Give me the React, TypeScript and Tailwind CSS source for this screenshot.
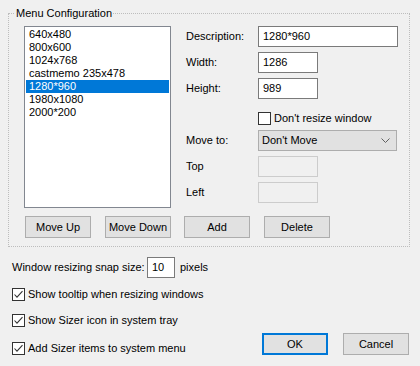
import React from "react";

const Check = ({ checked }: { checked: boolean }) => (
  <span className="w-[13px] h-[13px] border border-[#333333] bg-white flex items-center justify-center shrink-0">
    {checked && (
      <svg width="11" height="11" viewBox="0 0 11 11">
        <path d="M1.5 5.5 L4 8.2 L9.5 2.2" fill="none" stroke="#333333" strokeWidth="1.1" />
      </svg>
    )}
  </span>
);

const Btn = ({ children, primary }: { children: React.ReactNode; primary?: boolean }) => (
  <button
    className={
      primary
        ? "w-[66px] h-[22px] bg-[#e1e1e1] border-2 border-[#0078d7] text-black leading-[18px] shrink-0"
        : "w-[66px] h-[22px] bg-[#e1e1e1] border border-[#adadad] text-black leading-[20px] shrink-0"
    }
  >
    {children}
  </button>
);

const items = ["640x480", "800x600", "1024x768", "castmemo 235x478", "1280*960", "1980x1080", "2000*200"];

export default function App() {
  return (
    <div className="w-[420px] h-[366px] bg-[#f0f0f0] text-[11px] text-black font-['Liberation_Sans',Arial,sans-serif] pt-[13px] pl-[8px] overflow-hidden">
      <div className="relative w-[402px] h-[234px] border border-dotted border-[#bdbdbd]">
        <span className="absolute left-[6px] top-[-9px] px-[1px] bg-[#f0f0f0] leading-[16px]">Menu Configuration</span>
        <div className="pt-[12px] pl-[15px]">
          <div className="flex">
            <div className="w-[147px] h-[182px] border border-[#828790] bg-white p-[1px]">
              {items.map((t) => (
                <div
                  key={t}
                  className={
                    t === "1280*960"
                      ? "h-[13px] leading-[13px] pl-[3px] bg-[#0078d7] text-white"
                      : "h-[13px] leading-[13px] pl-[3px]"
                  }
                >
                  {t}
                </div>
              ))}
            </div>
            <div className="ml-[15px] flex flex-col">
              <div className="h-[26px] flex items-start">
                <span className="w-[72px] leading-[21px]">Description:</span>
                <div className="w-[140px] h-[21px] border border-[#7a7a7a] bg-white pl-[4px] leading-[19px]">1280*960</div>
              </div>
              <div className="h-[26px] flex items-start">
                <span className="w-[72px] leading-[21px]">Width:</span>
                <div className="w-[60px] h-[21px] border border-[#7a7a7a] bg-white pl-[4px] leading-[19px]">1286</div>
              </div>
              <div className="h-[26px] flex items-start">
                <span className="w-[72px] leading-[21px]">Height:</span>
                <div className="w-[60px] h-[21px] border border-[#7a7a7a] bg-white pl-[4px] leading-[19px]">989</div>
              </div>
              <div className="h-[26px] flex items-center pl-[72px] pt-[2px]">
                <Check checked={false} />
                <span className="ml-[3px]">Don't resize window</span>
              </div>
              <div className="h-[26px] flex items-start">
                <span className="w-[72px] leading-[21px]">Move to:</span>
                <div className="w-[139px] h-[21px] border border-[#adadad] bg-[#e1e1e1] pl-[3px] pr-[6px] flex items-center justify-between">
                  <span>Don't Move</span>
                  <svg width="9" height="5" viewBox="0 0 9 5">
                    <path d="M0.5 0.5 L4.5 4.5 L8.5 0.5" fill="none" stroke="#606060" strokeWidth="1" />
                  </svg>
                </div>
              </div>
              <div className="h-[26px] flex items-start">
                <span className="w-[72px] leading-[21px]">Top</span>
                <div className="w-[60px] h-[21px] border border-[#cccccc] bg-[#f0f0f0]" />
              </div>
              <div className="h-[26px] flex items-start">
                <span className="w-[72px] leading-[21px]">Left</span>
                <div className="w-[60px] h-[21px] border border-[#cccccc] bg-[#f0f0f0]" />
              </div>
            </div>
          </div>
          <div className="flex mt-[8px] pl-[1px]">
            <Btn>Move Up</Btn>
            <div className="ml-[14px]">
              <Btn>Move Down</Btn>
            </div>
            <div className="ml-[13px]">
              <Btn>Add</Btn>
            </div>
            <div className="ml-[14px]">
              <Btn>Delete</Btn>
            </div>
          </div>
        </div>
      </div>
      <div className="ml-[4px] w-[397px]">
        <div className="mt-[10px] h-[21px] flex items-center">
          <span className="w-[135px]">Window resizing snap size:</span>
          <div className="w-[28px] h-[21px] border border-[#7a7a7a] bg-white pl-[4px] leading-[19px]">10</div>
          <span className="ml-[5px]">pixels</span>
        </div>
        <div className="mt-[10px] h-[13px] flex items-center">
          <Check checked />
          <span className="ml-[3px]">Show tooltip when resizing windows</span>
        </div>
        <div className="mt-[13px] h-[13px] flex items-center">
          <Check checked />
          <span className="ml-[3px]">Show Sizer icon in system tray</span>
        </div>
        <div className="mt-[6px] flex items-end justify-between">
          <div className="h-[13px] flex items-center">
            <Check checked />
            <span className="ml-[3px]">Add Sizer items to system menu</span>
          </div>
          <div className="flex gap-[15px]">
            <Btn primary>OK</Btn>
            <Btn>Cancel</Btn>
          </div>
        </div>
      </div>
    </div>
  );
}
